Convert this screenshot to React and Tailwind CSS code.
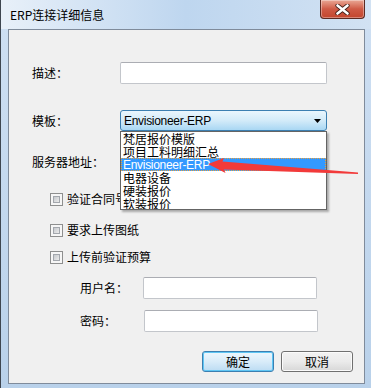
import React from "react";

const cjk = { fontFamily: '"Noto Sans CJK SC", "Noto Sans", sans-serif' };
const latin = { fontFamily: '"Liberation Sans", "Noto Sans CJK SC", sans-serif' };

const Checkbox = ({ label }) => (
  <div className="flex items-center h-[14px] ml-[41px]">
    <div className="w-[13px] h-[13px] shrink-0 border border-[#8e8f8f] bg-[#f6f6f6] p-[2px]">
      <div className="w-full h-full border border-[#a3a7ad] bg-gradient-to-br from-[#c6c9cd] to-[#ececec]" />
    </div>
    <span className="ml-[4px] text-[12px] text-black leading-none whitespace-nowrap" style={cjk}>
      {label}
    </span>
  </div>
);

const TextBox = ({ className = "" }) => (
  <div
    className={`h-[22px] shrink-0 bg-white border border-[#c3c6cb] border-t-[#abadb3] rounded-[2px] ${className}`}
  />
);

const Label = ({ children, className = "" }) => (
  <span className={`shrink-0 whitespace-nowrap text-[12px] leading-none text-black ${className}`} style={cjk}>
    {children}
  </span>
);

const items = ["梵居报价模版", "项目工料明细汇总", "Envisioneer-ERP", "电器设备", "硬装报价", "软装报价"];

export default function App() {
  return (
    <div className="relative w-[371px] h-[388px] overflow-hidden bg-gradient-to-b from-[#cfe0f3] to-[#b9d1ea] border-l border-l-[#3e4650] flex flex-col">
      {/* title bar */}
      <div className="relative h-[29px] shrink-0 bg-gradient-to-r from-[#e8f0f9] via-[#bed6ef] to-[#d2e2f3]">
        <div className="absolute left-[9px] top-[7px] text-[12px] leading-[16px] text-black" style={cjk}>
          ERP连接详细信息
        </div>
        <div className="absolute left-[319px] top-0 w-[45px] h-[19px] rounded-b-[4px] border border-t-0 border-[#5b2a22] bg-gradient-to-b from-[#e9a795] via-[#cf5a45] to-[#c2452d] flex items-center justify-center shadow-[inset_0_0_0_1px_rgba(255,255,255,0.35)]">
          <svg width="15" height="11" viewBox="0 0 15 11">
            <path d="M2.5 1.5 L12.5 9.5 M12.5 1.5 L2.5 9.5" stroke="#3b1a14" strokeWidth="4.2" strokeLinecap="round" />
            <path d="M2.5 1.5 L12.5 9.5 M12.5 1.5 L2.5 9.5" stroke="#ffffff" strokeWidth="2.6" strokeLinecap="round" />
          </svg>
        </div>
      </div>

      {/* client area */}
      <div className="relative ml-[7px] w-[357px] h-[355px] bg-[#f0f0f0] border border-[#7f8b9b] flex flex-col">
        {/* 描述 */}
        <div className="flex items-center mt-[32px] h-[22px]">
          <Label className="w-[111px] pl-[23px]">描述：</Label>
          <TextBox className="w-[207px]" />
        </div>

        {/* 模板 */}
        <div className="flex items-center mt-[26px] h-[21px]">
          <Label className="w-[111px] pl-[23px]">模板：</Label>
          <div className="w-[207px] h-[21px] shrink-0 rounded-[3px] border border-[#3c7fb1] bg-gradient-to-b from-[#eaf6fd] via-[#d3ebf9] to-[#a9d7f3] flex items-center pl-[3px] pr-[5px]">
            <span className="flex-1 text-[12px] leading-none tracking-[-0.3px]" style={latin}>Envisioneer-ERP</span>
            <svg width="7" height="4" viewBox="0 0 7 4">
              <path d="M0 0 H7 L3.5 4 Z" fill="#000" />
            </svg>
          </div>
        </div>

        {/* 服务器地址 */}
        <div className="flex items-center mt-[20px] h-[22px]">
          <Label className="w-[111px] pl-[23px]">服务器地址：</Label>
          <TextBox className="w-[207px]" />
        </div>

        <div className="mt-[19px]">
          <Checkbox label="验证合同号" />
        </div>
        <div className="mt-[17px]">
          <Checkbox label="要求上传图纸" />
        </div>
        <div className="mt-[13px]">
          <Checkbox label="上传前验证预算" />
        </div>

        {/* 用户名 */}
        <div className="flex items-center mt-[13px] h-[22px]">
          <Label className="w-[134px] pl-[71px]">用户名：</Label>
          <TextBox className="w-[174px]" />
        </div>
        {/* 密码 */}
        <div className="flex items-center mt-[11px] h-[22px]">
          <Label className="w-[135px] pl-[71px]">密码：</Label>
          <TextBox className="w-[174px]" />
        </div>

        {/* buttons */}
        <div className="flex justify-end gap-[7px] pr-[11px] mt-[19px]">
          <button className="w-[72px] h-[21px] rounded-[3px] border border-[#3c7fb1] bg-gradient-to-b from-[#eef7fd] via-[#d9ecf9] to-[#bcdcf3] shadow-[inset_0_0_0_1px_#5fc6f4] text-[12px] leading-none" style={cjk}>
            确定
          </button>
          <button className="w-[72px] h-[21px] rounded-[3px] border border-[#707070] bg-gradient-to-b from-[#f2f2f2] via-[#ebebeb] to-[#d7d7d7] shadow-[inset_0_0_0_1px_#fbfbfb] text-[12px] leading-none" style={cjk}>
            取消
          </button>
        </div>

        {/* open dropdown list */}
        <div className="absolute left-[111px] top-[101px] w-[207px] h-[79px] bg-white border border-[#646464] shadow-[2px_2px_2px_rgba(0,0,0,0.3)] flex flex-col overflow-hidden">
          {items.map((it) =>
            it === "Envisioneer-ERP" ? (
              <div
                key={it}
                className="h-[13px] shrink-0 bg-[#3399ff] text-white border border-dotted border-[#e8a040] flex items-center pl-[1px] text-[12px] leading-none tracking-[-0.3px]"
                style={latin}
              >
                {it}
              </div>
            ) : (
              <div key={it} className="h-[13px] shrink-0 flex items-center pl-[2px] text-[12px] leading-[12px] text-black" style={cjk}>
                {it}
              </div>
            )
          )}
        </div>
      </div>

      {/* red annotation arrow */}
      <svg className="absolute left-0 top-0 pointer-events-none" width="371" height="388">
        <polygon
          points="207,164 223,158 221.5,161.5 357,172.5 357,174 223,169.5 224.5,173"
          fill="#f23a3a"
        />
      </svg>
    </div>
  );
}
